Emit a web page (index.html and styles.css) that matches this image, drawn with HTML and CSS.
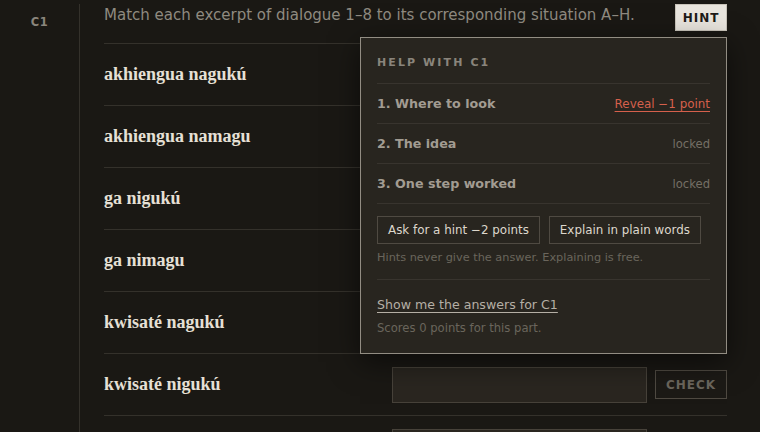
FILE: index.html
```html
<!DOCTYPE html>
<html lang="en">
<head>
<meta charset="utf-8">
<title>C1</title>
<link rel="stylesheet" href="styles.css">
</head>
<body>
<div class="page">
  <aside class="side"><span class="part">C1</span></aside>
  <main class="main">
    <div class="head">
      <p class="prompt">Match each excerpt of dialogue 1–8 to its corresponding situation A–H.</p>
      <button class="hint-btn">HINT</button>
    </div>
    <div class="rows">
      <div class="row row-under"><span class="term">akhiengua nagukú</span><div class="ans"><input class="box" type="text"><button class="check">CHECK</button></div></div>
      <div class="row row-under"><span class="term">akhiengua namagu</span><div class="ans"><input class="box" type="text"><button class="check">CHECK</button></div></div>
      <div class="row row-under"><span class="term">ga nigukú</span><div class="ans"><input class="box" type="text"><button class="check">CHECK</button></div></div>
      <div class="row row-under"><span class="term">ga nimagu</span><div class="ans"><input class="box" type="text"><button class="check">CHECK</button></div></div>
      <div class="row row-under"><span class="term">kwisaté nagukú</span><div class="ans"><input class="box" type="text"><button class="check">CHECK</button></div></div>
      <div class="row"><span class="term">kwisaté nigukú</span><div class="ans"><input class="box" type="text"><button class="check">CHECK</button></div></div>
      <div class="row row-cut"><span class="term">kwisaté nimagu</span><div class="ans"><input class="box" type="text"><button class="check">CHECK</button></div></div>
    </div>

    <section class="pop">
      <h2 class="pop-title">HELP WITH C1</h2>
      <div class="step"><span class="step-name">1. Where to look</span><a class="reveal" href="#">Reveal −1 point</a></div>
      <div class="step"><span class="step-name">2. The idea</span><span class="locked">locked</span></div>
      <div class="step"><span class="step-name">3. One step worked</span><span class="locked">locked</span></div>
      <div class="help-block">
        <div class="actions">
          <button class="act">Ask for a hint −2 points</button>
          <button class="act">Explain in plain words</button>
        </div>
        <p class="note">Hints never give the answer. Explaining is free.</p>
      </div>
      <a class="show" href="#">Show me the answers for C1</a>
      <p class="note note-last">Scores 0 points for this part.</p>
    </section>
  </main>
</div>
</body>
</html>
```

FILE: styles.css
```css
* { box-sizing: border-box; }
html, body { margin: 0; padding: 0; }
body {
  background: #1a1814;
  font-family: "DejaVu Sans", Verdana, sans-serif;
  color: #e6e0d6;
  height: 432px;
  overflow: hidden;
}
.page {
  display: grid;
  grid-template-columns: 80px 1fr;
  height: 100%;
}
.side {
  border-right: 1px solid #34312b;
  margin-top: 4px;
  text-align: center;
  padding-top: 7px;
}
.part {
  font-size: 11.5px;
  font-weight: bold;
  color: #8a857c;
  letter-spacing: 0.5px;
}
.main {
  position: relative;
  padding: 0 33px 0 24px;
}
.head {
  display: flex;
  justify-content: space-between;
  align-items: flex-start;
  height: 43px;
  padding-top: 4px;
}
.prompt {
  margin: 0;
  font-size: 15px;
  line-height: 22px;
  color: #8f8a80;
}
.hint-btn {
  width: 52px;
  height: 27px;
  background: #e9e5de;
  border: 1px solid #c9c4ba;
  color: #1d1b17;
  font-family: inherit;
  font-weight: bold;
  font-size: 12px;
  letter-spacing: 1px;
  padding: 0;
}
.row {
  display: flex;
  align-items: center;
  justify-content: space-between;
  height: 62px;
  border-top: 1px solid #34312b;
}
.term {
  font-family: "Liberation Serif", "Times New Roman", serif;
  font-weight: bold;
  font-size: 18px;
  color: #e6e0d6;
}
.row-cut .term,
.row-cut .check,
.row-under .ans {
  visibility: hidden;
}
.ans {
  display: flex;
  align-items: center;
  gap: 8px;
}
.box {
  width: 255px;
  height: 36px;
  background: #2a2620;
  border: 1px solid #47423a;
  border-radius: 0;
}
.check {
  width: 72px;
  height: 29px;
  background: #1c1a16;
  border: 1px solid #4f4a42;
  color: #6b665d;
  font-family: inherit;
  font-weight: bold;
  font-size: 12px;
  letter-spacing: 1px;
  padding: 0;
}
.pop {
  position: absolute;
  left: 280px;
  top: 37px;
  width: 367px;
  height: 317px;
  background: #28251f;
  border: 1px solid #928d83;
  box-shadow: 0 8px 28px rgba(0, 0, 0, 0.55);
  padding: 0 16px;
}
.pop-title {
  margin: 0;
  padding: 16px 0 12px;
  font-size: 11px;
  line-height: 17px;
  font-weight: bold;
  letter-spacing: 2.1px;
  color: #8a857c;
  border-bottom: 1px solid #38342e;
}
.step {
  display: flex;
  justify-content: space-between;
  align-items: center;
  height: 40px;
  border-bottom: 1px solid #38342e;
}
.step-name {
  font-size: 12.7px;
  font-weight: bold;
  color: #a29c92;
}
.reveal {
  font-size: 11.9px;
  color: #d6604c;
  text-decoration: underline;
  text-underline-offset: 3px;
}
.locked {
  font-size: 11.6px;
  color: #746f66;
}
.help-block {
  padding: 12px 0 13px;
  border-bottom: 1px solid #38342e;
}
.actions {
  display: flex;
  gap: 9px;
}
.act {
  height: 28px;
  padding: 0 10px;
  white-space: nowrap;
  background: transparent;
  border: 1px solid #4f4a42;
  color: #ddd7cc;
  font-family: inherit;
  font-size: 11.9px;
}
.note {
  margin: 6px 0 0;
  font-size: 11.3px;
  line-height: 16px;
  color: #6a655c;
}
.show {
  display: inline-block;
  margin-top: 16px;
  font-size: 12.6px;
  line-height: 18px;
  color: #b5afa5;
  text-decoration: underline;
  text-underline-offset: 3px;
}
.note-last {
  margin-top: 6px;
  font-size: 11.6px;
}
```
